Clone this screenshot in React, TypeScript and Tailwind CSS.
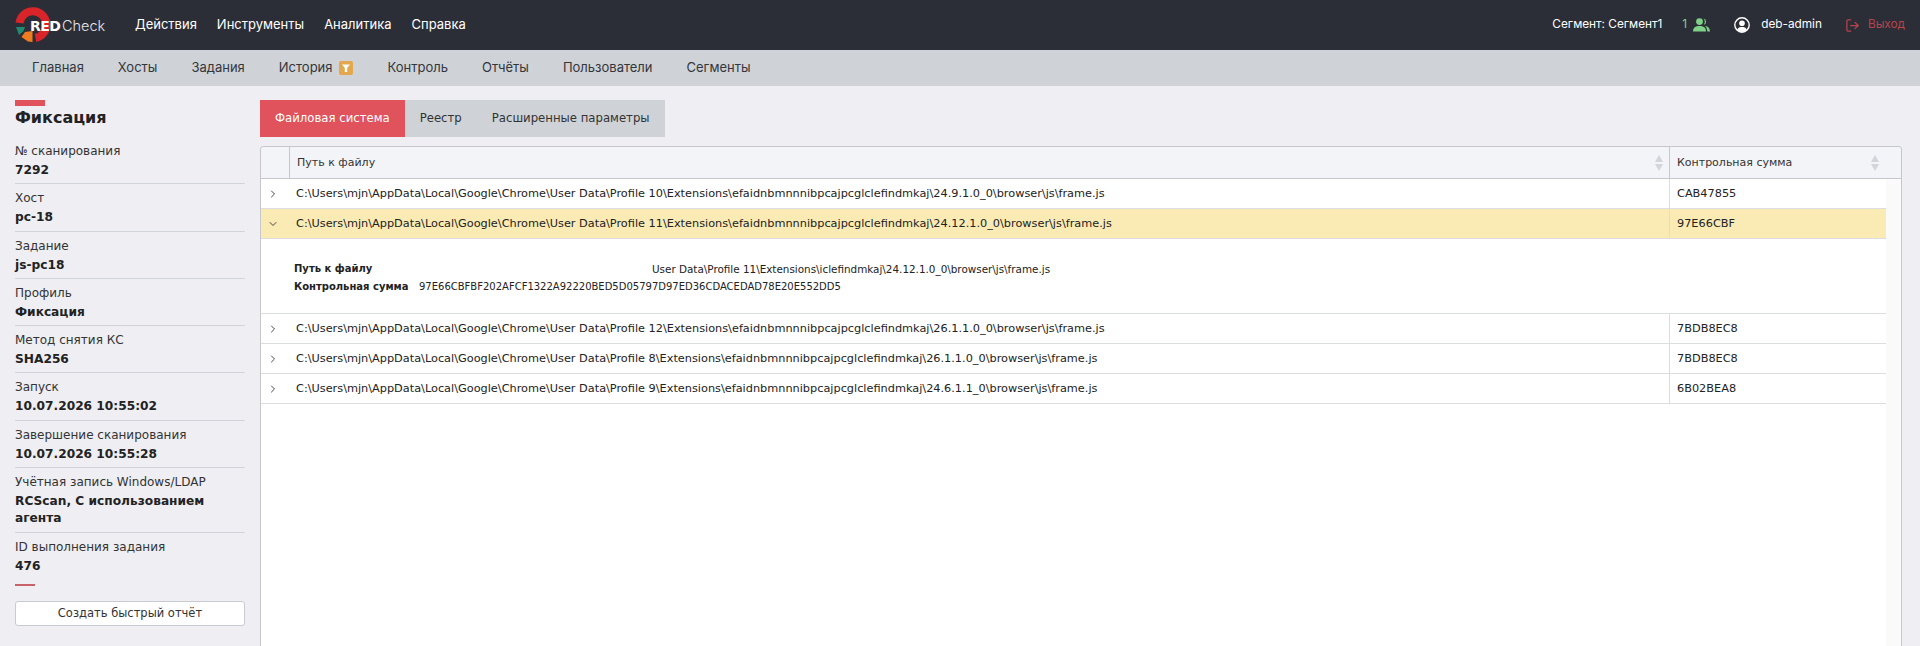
import React from 'react';
import { ChevronDown, ChevronRight, LogOut } from 'lucide-react';

const body = "font-['DejaVu_Sans',sans-serif]";
const ui = "font-['Inter',sans-serif]";

const facts = [
  { label: '№ сканирования', value: '7292' },
  { label: 'Хост', value: 'pc-18' },
  { label: 'Задание', value: 'js-pc18' },
  { label: 'Профиль', value: 'Фиксация' },
  { label: 'Метод снятия КС', value: 'SHA256' },
  { label: 'Запуск', value: '10.07.2026 10:55:02' },
  { label: 'Завершение сканирования', value: '10.07.2026 10:55:28' },
  { label: 'Учётная запись Windows/LDAP', value: 'RCScan, С использованием агента' },
  { label: 'ID выполнения задания', value: '476' },
];

const base = 'C:\\Users\\mjn\\AppData\\Local\\Google\\Chrome\\User Data\\Profile ';
const ext = '\\Extensions\\efaidnbmnnnibpcajpcglclefindmkaj\\';

const Logo = () => (
  <div className="relative w-[92px] h-[44px] shrink-0">
    <svg width="50" height="44" viewBox="0 0 50 44" className="absolute left-0 top-0">
      <path d="M5.5 20 A13.5 13.5 0 1 1 21.5 35" fill="none" stroke="#d9252a" strokeWidth="8" />
      <path d="M2 24 L11 24 L9.5 28 L5 32 Z" fill="#1f8a70" />
      <path d="M11 29 L18.5 28 L18.5 39 L14 38.5 L7.5 34 Z" fill="#ee7d22" />
    </svg>
    <span className={`${body} absolute left-[16px] top-[13px] text-[14px] leading-[20px] font-bold text-white tracking-[-0.5px]`}>
      RED
    </span>
    <span className={`${ui} absolute left-[48px] top-[13px] text-[14.5px] leading-[20px] font-light text-[#e4e5e8]`}>
      Check
    </span>
  </div>
);

const UsersIcon = () => (
  <svg width="17" height="14" viewBox="0 0 17 14" fill="#7fd188">
    <circle cx="6.5" cy="3.6" r="3.4" />
    <path d="M0 13.5 C0 9.5 2.5 8 6.5 8 C10.5 8 13 9.5 13 13.5 Z" />
    <path d="M10.5 0.6 A3.2 3.2 0 0 1 10.8 6.8 A5 5 0 0 0 10.5 0.6 Z" />
    <path d="M12 8 C15 8.4 16.8 10 17 13.5 L14.4 13.5 C14.2 11 13.4 9.2 12 8 Z" />
  </svg>
);

const UserCircle = () => (
  <svg width="16" height="16" viewBox="0 0 16 16">
    <circle cx="8" cy="8" r="7.2" fill="none" stroke="#fff" strokeWidth="1.4" />
    <circle cx="8" cy="6.3" r="2.8" fill="#fff" />
    <path d="M3 13 C4 10.5 6 10 8 10 C10 10 12 10.5 13 13 A7 7 0 0 1 3 13 Z" fill="#fff" />
  </svg>
);

const SortArrows = () => (
  <svg width="8" height="16" viewBox="0 0 8 16" fill="#d3d5db">
    <path d="M4 0 L8 7 L0 7 Z" />
    <path d="M0 9 L8 9 L4 16 Z" />
  </svg>
);

const Row = ({ profile, tail, sum, open }: any) => (
  <div className={`flex h-[30px] items-center border-b border-[#dcdde0] ${open ? 'bg-[#faebb5]' : 'bg-white'}`}>
    <div className="w-[29px] pl-[6px] text-[#333]">
      {open ? <ChevronDown size={12} strokeWidth={1.8} /> : <ChevronRight size={12} strokeWidth={1.8} />}
    </div>
    <div className="flex-1 pl-[6px] pt-[1px] whitespace-nowrap">
      {base}
      {profile}
      {ext}
      {tail}\browser\js\frame.js
    </div>
    <div className="w-[217px] h-full flex items-center pl-[7px] pt-[1px] border-l border-[#dcdde0]">{sum}</div>
  </div>
);

export default function App() {
  return (
    <div className={`${body} h-[646px] overflow-hidden flex flex-col bg-[#eeeef3] text-[#222]`}>
      <header className={`${ui} h-[50px] shrink-0 flex items-center bg-[#2c2e37] pl-[14px] pr-[15px] text-white`}>
        <Logo />
        <nav className="flex gap-[20px] ml-[29px] text-[13px]">
          <span>Действия</span>
          <span>Инструменты</span>
          <span>Аналитика</span>
          <span>Справка</span>
        </nav>
        <div className="ml-auto flex items-center text-[11.8px]">
          <span>Сегмент: Сегмент1</span>
          <span className="ml-[20px] text-[#7fd188]">1</span>
          <span className="ml-[6px]"><UsersIcon /></span>
          <span className="ml-[24px]"><UserCircle /></span>
          <span className="ml-[11px]">deb-admin</span>
          <LogOut size={15} className="ml-[23px] text-[#b8434c] -scale-x-100 rotate-180" />
          <span className="ml-[8px] text-[#b8434c]">Выход</span>
        </div>
      </header>

      <nav className={`${ui} h-[36px] shrink-0 flex items-center gap-[34px] pl-[32px] bg-[#cfd2d6] text-[13px] text-[#33363c]`}>
        <span>Главная</span>
        <span>Хосты</span>
        <span>Задания</span>
        <span className="flex items-center gap-[6px] mr-[1px]">
          История
          <svg width="14" height="14" viewBox="0 0 14 14">
            <rect width="14" height="14" rx="2" fill="#e3a84b" />
            <path d="M3 3.5 H11 L8.2 7 V11 H5.8 V7 Z" fill="#fff" />
          </svg>
        </span>
        <span>Контроль</span>
        <span>Отчёты</span>
        <span>Пользователи</span>
        <span>Сегменты</span>
      </nav>

      <div className="flex-1 min-h-0 flex">
        <aside className="w-[260px] shrink-0 pl-[15px] pr-[15px] pt-[14px]">
          <div className="w-[30px] h-[6px] bg-[#e0525c]" />
          <h1 className="text-[16px] leading-[24px] font-bold">Фиксация</h1>
          <dl className="mt-[12px] text-[12px]">
            {facts.map((f, i) => (
              <div key={f.label} className={`pb-[4px] mb-[5px] ${i < facts.length - 1 ? 'border-b border-[#d3d4da]' : ''}`}>
                <dt className="leading-[18px] text-[#333]">{f.label}</dt>
                <dd className="mt-[2px] text-[12.2px] leading-[17.3px] font-bold">{f.value}</dd>
              </div>
            ))}
          </dl>
          <div className="mt-[2px] w-[20px] h-[2px] bg-[#c9606a]" />
          <button className="mt-[15px] w-full h-[25px] bg-white border border-[#c9cbd1] rounded-[3px] text-[11.5px] text-[#333]">
            Создать быстрый отчёт
          </button>
        </aside>

        <main className="flex-1 min-w-0 pt-[14px] pr-[18px] flex flex-col">
          <div className="flex self-start h-[37px] items-center bg-[#cfd2d6] text-[11.7px] text-[#333]">
            <span className="h-full px-[15px] flex items-center bg-[#e0525c] text-white">Файловая система</span>
            <span className="px-[15px]">Реестр</span>
            <span className="px-[15px]">Расширенные параметры</span>
          </div>

          <div className="mt-[9px] flex-1 min-h-0 flex flex-col border border-b-0 border-[#c5c7cd] rounded-t-[4px] text-[11.3px] overflow-hidden">
            <div className="flex h-[32px] shrink-0 items-center bg-[#f3f4f8] border-b border-[#c5c7cd] text-[#333] text-[11px]">
              <div className="w-[29px] h-full border-r border-[#c5c7cd]" />
              <div className="flex-1 h-full flex items-center justify-between pl-[7px] pr-[6px]">
                <span className="pt-[1px]">Путь к файлу</span>
                <SortArrows />
              </div>
              <div className="w-[232px] h-full flex items-center justify-between pl-[7px] pr-[22px] border-l border-[#c5c7cd]">
                <span className="pt-[1px]">Контрольная сумма</span>
                <SortArrows />
              </div>
            </div>

            <div className="flex-1 flex bg-white">
              <div className="flex-1 min-w-0 flex flex-col">
                <Row profile="10" tail="24.9.1.0_0" sum="CAB47855" />
                <Row profile="11" tail="24.12.1.0_0" sum="97E66CBF" open />
                <div className="h-[75px] pl-[33px] pt-[21px] border-b border-[#dcdde0] text-[10px] leading-[18px]">
                  <div className="flex">
                    <b className="w-[358px]">Путь к файлу</b>
                    <span className="text-[10.4px]">User Data\Profile 11\Extensions\iclefindmkaj\24.12.1.0_0\browser\js\frame.js</span>
                  </div>
                  <div className="flex">
                    <b className="w-[125px]">Контрольная сумма</b>
                    <span>97E66CBFBF202AFCF1322A92220BED5D05797D97ED36CDACEDAD78E20E552DD5</span>
                  </div>
                </div>
                <Row profile="12" tail="26.1.1.0_0" sum="7BDB8EC8" />
                <Row profile="8" tail="26.1.1.0_0" sum="7BDB8EC8" />
                <Row profile="9" tail="24.6.1.1_0" sum="6B02BEA8" />
              </div>
              <div className="w-[15px] shrink-0 bg-[#fafafa]" />
            </div>
          </div>
        </main>
      </div>
    </div>
  );
}
